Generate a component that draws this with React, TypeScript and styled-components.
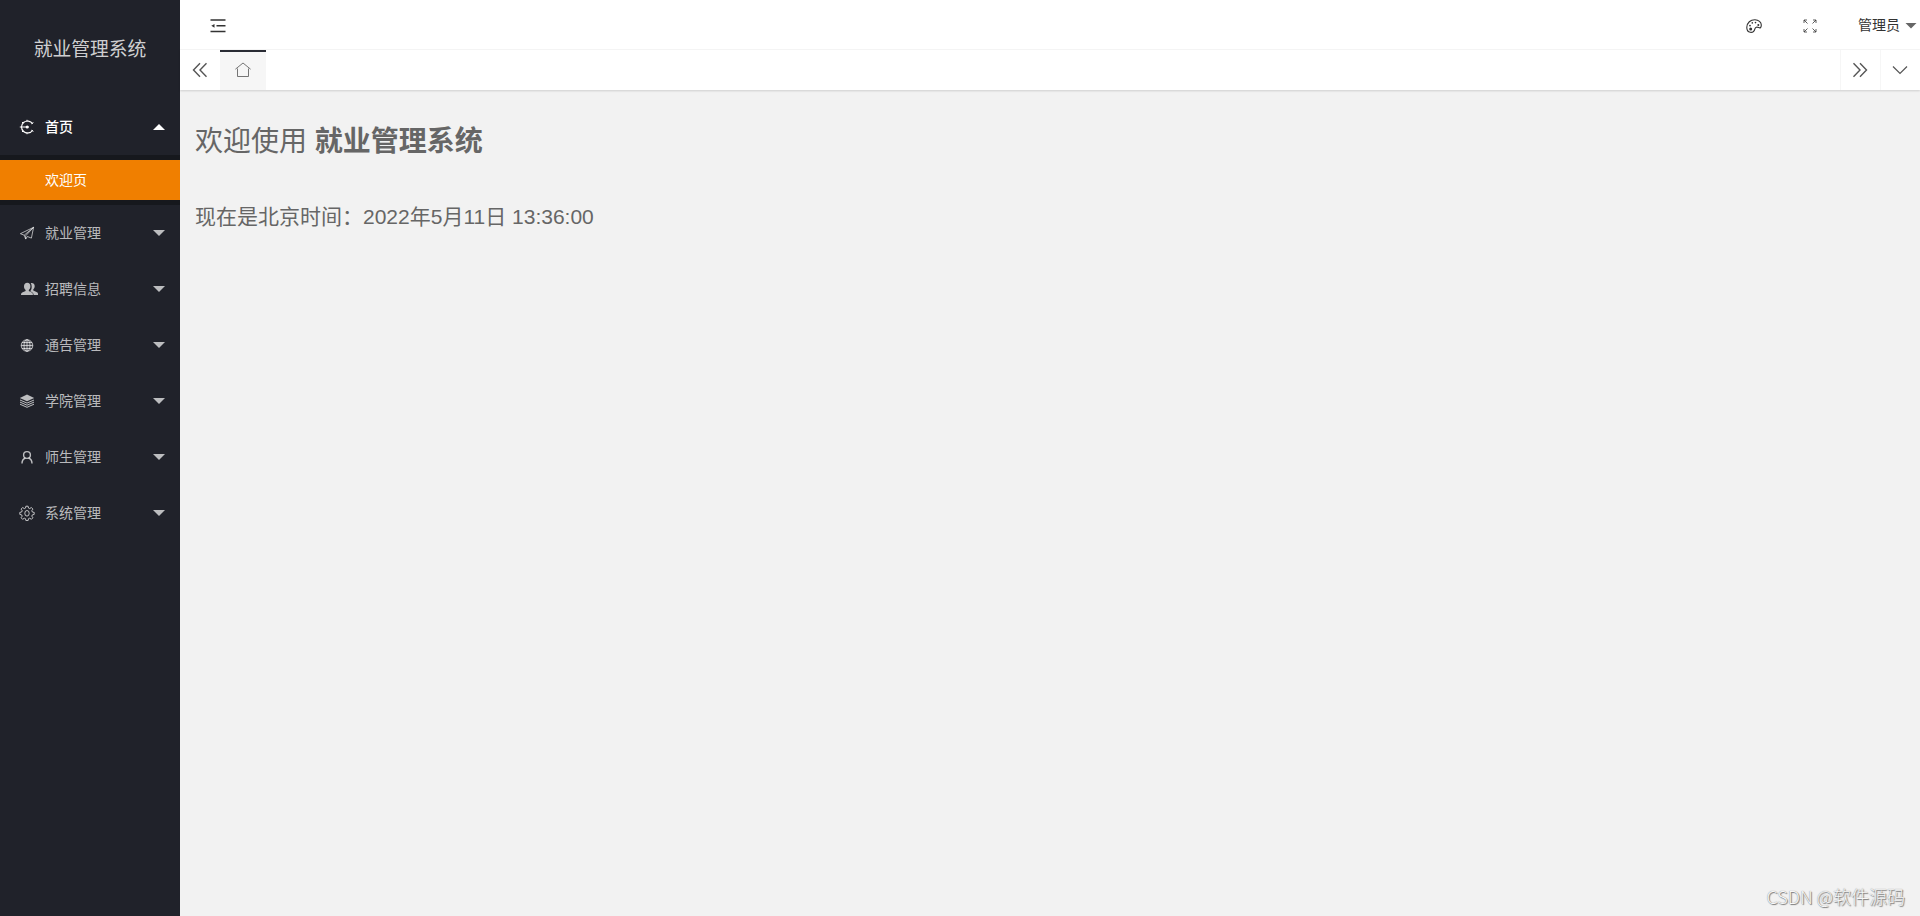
import React from 'react'
import styled, { createGlobalStyle } from 'styled-components'

const fontFamily = "'Liberation Sans', 'Noto Sans CJK SC', sans-serif"

const GlobalStyle = createGlobalStyle`
  * {
    box-sizing: border-box;
  }

  body {
    margin: 0;
    font-family: ${fontFamily};
    font-size: 14px;
    color: #333;
    background: #f2f2f2;
  }
`

const Layout = styled.div`
  position: relative;
  display: flex;
  height: 100vh;
  overflow: hidden;
`

const Sidebar = styled.aside`
  flex: none;
  width: 180px;
  background: #20222a;
`

const Logo = styled.div`
  height: 99px;
  padding-top: 25px;
  font-size: 18.8px;
  line-height: 49px;
  text-align: center;
  white-space: nowrap;
  color: rgba(255, 255, 255, 0.8);
`

const MenuItem = styled.div<{ $active?: boolean }>`
  display: flex;
  align-items: center;
  height: 56px;
  padding: 0 15px 0 19px;
  color: ${({ $active }) => ($active ? '#fff' : 'rgba(255, 255, 255, 0.7)')};
`

const MenuIcon = styled.span`
  display: flex;
  width: 26px;
`

const MenuLabel = styled.span`
  flex: 1;
  line-height: 20px;
  font-weight: ${({ $active }: { $active?: boolean }) => ($active ? 500 : 400)};
`

const Caret = styled.i<{ $up?: boolean }>`
  width: 12px;
  height: 6px;
  background: currentColor;
  clip-path: ${({ $up }) =>
    $up ? 'polygon(0 100%, 50% 0, 100% 100%)' : 'polygon(0 0, 100% 0, 50% 100%)'};
`

const SubMenu = styled.div`
  padding: 5px 0;
  background: #16181d;
`

const SubMenuItem = styled.div`
  height: 40px;
  padding-left: 45px;
  line-height: 40px;
  color: #fff;
  background: #f07f00;
`

const Main = styled.div`
  flex: 1;
  display: flex;
  flex-direction: column;
`

const Header = styled.header`
  display: flex;
  align-items: center;
  justify-content: space-between;
  height: 50px;
  padding: 2px 3px 0 30px;
  background: #fff;
  border-bottom: 1px solid #f6f6f6;
`

const HeaderRight = styled.div`
  display: flex;
  align-items: center;
`

const HeaderButton = styled.span`
  display: flex;
  justify-content: center;
  width: 56px;
`

const User = styled.div`
  display: flex;
  align-items: center;
  gap: 5px;
  margin-left: 20px;
  line-height: 20px;

  span {
    margin-top: -2px;
  }

  i {
    background: #666;
  }
`

const Tabs = styled.div`
  display: flex;
  height: 40px;
  background: #fff;
  box-shadow: 0 1px 2px rgba(0, 0, 0, 0.15);
`

const TabControl = styled.div<{ $bordered?: boolean }>`
  display: flex;
  align-items: center;
  justify-content: center;
  width: 40px;
  padding-right: 1px;
  color: #555;
  border-left: ${({ $bordered }) => ($bordered ? '1px solid #f6f6f6' : 'none')};
`

const HomeTab = styled.div`
  display: flex;
  align-items: center;
  justify-content: center;
  width: 46px;
  margin-right: auto;
  padding-bottom: 2px;
  color: #666;
  background: #f6f6f6;
  border-top: 2px solid #292b34;
`

const Content = styled.main`
  flex: 1;
  padding: 32px 15px;
  color: #666;
`

const Welcome = styled.h1`
  margin: 0;
  font-size: 28px;
  font-weight: 400;
  line-height: 40px;

  b {
    font-weight: 700;
  }
`

const Clock = styled.p`
  margin: 40px 0 0;
  font-size: 21px;
  line-height: 30px;
`

const Watermark = styled.div`
  position: absolute;
  right: 15px;
  bottom: 7px;
  font-family: 'Noto Sans CJK SC', sans-serif;
  font-size: 18px;
  font-weight: 300;
  line-height: 26px;
  color: #f8f8f8;
  text-shadow: 1px 1px 1px #777, 0 0 1px #777;
`

interface IconProps {
  children: React.ReactNode
  size?: number
  stroke?: number
}

const Icon = ({ children, size = 16, stroke = 1.2 }: IconProps) => (
  <svg width={size} height={size} viewBox="0 0 16 16" fill="none" stroke="currentColor" strokeWidth={stroke}>
    {children}
  </svg>
)

const HomeGauge = () => (
  <Icon>
    <path d="M13.6 4.8A6 6 0 1 0 13.6 11.2" />
    <path d="M.8 8h9" strokeWidth="1" />
    <path d="M8 .8v2M8 13.2v2M3 3l1 1M3 13l1-1M12.4 4.800l2-1.200M12.400 11.200l2 1.200" strokeWidth="1" />
    <circle cx="8.2" cy="8" r="1.500" fill="currentColor" stroke="none" />
  </Icon>
)

const Plane = () => (
  <Icon stroke={0.9}>
    <path d="M14.6 2.3 1.4 8.7l3.8 1.500 1.500 3.900 1.700-2.600 4 1.600zM14.6 2.3 5.2 10.2M6.700 13.900V10.800L14.600 2.300" />
  </Icon>
)

const Group = () => (
  <svg width="19" height="16" viewBox="0 0 19 16" fill="currentColor">
    <path d="M11.7 2.2c1.8-.8 4 .3 4 2.7 0 1.5-.6 2.7-1.4 3.4v1.2l3.7 1.8c.9.5 1.1 1.2 1.1 2.7h-4.5c0-1.7-.7-2.5-3.500-3.700.9-1 1.600-2.300 1.600-4.200 0-1.600-.2-3-1-3.900z" />
    <path d="M8.3 1.8c2 0 3.100 1.400 3.100 3.500 0 1.700-.6 3-1.600 3.800v1l3 1.400c1 .5 1.100 1.300 1.100 2.500H2c0-1.400.3-2.100 1.200-2.600L6.600 10V9C5.600 8.200 5 6.900 5 5.200c0-2 1.300-3.400 3.300-3.400z" />
  </svg>
)

const Globe = () => (
  <Icon stroke={0.9}>
    <circle cx="8" cy="8.500" r="5.800" fill="currentColor" fillOpacity=".2" />
    <ellipse cx="8" cy="8.500" rx="3" ry="5.800" />
    <path d="M8 2.700v11.600M2.200 8.500h11.600M3 5.500h10M3 11.500h10" />
  </Icon>
)

const Layers = () => (
  <Icon stroke={1}>
    <path d="M8 1.500 15.200 4.900 8 8.200.8 4.900z" fill="currentColor" stroke="none" />
    <path d="M1 7 8 10.100 15 7M1 9.100 8 12.200 15 9.100M1 11.200 8 14.300 15 11.200" />
  </Icon>
)

const Person = () => (
  <Icon stroke={1.4}>
    <circle cx="8" cy="6" r="3.400" />
    <path d="M3 14.400c0-2.700 1.200-4.500 3.400-5.400M13 14.400c0-2.700-1.200-4.500-3.400-5.400" />
  </Icon>
)

const Gear = () => (
  <Icon stroke={1}>
    <path d="M6.9 1.200h2.200l.4 1.900 1.200.5 1.700-1.100 1.500 1.600-1.100 1.600.5 1.300 1.900.4v2l-1.900.5-.5 1.200 1.100 1.700-1.500 1.500-1.700-1.100-1.200.5-.4 1.900H6.900l-.4-1.900-1.200-.5-1.700 1.100-1.500-1.500 1.100-1.700-.5-1.200-1.900-.5v-2L2.700 7l.5-1.300-1.100-1.600 1.500-1.600 1.700 1.100 1.200-.5z" />
    <ellipse cx="8" cy="8.300" rx="2.200" ry="2.800" />
  </Icon>
)

const Shrink = () => (
  <Icon stroke={1.5}>
    <path d="M.5 2h15M6.500 7.800h9M.5 13.500h15" />
    <path d="M4.500 5.900v3.800L1.300 7.800z" fill="currentColor" stroke="none" />
  </Icon>
)

const Palette = () => (
  <Icon stroke={1.1}>
    <path d="M4.300 14.300C2 14 .7 12 .8 9.300 1 4.800 4.500 1.600 9 1.700c3.600.1 6.300 2.600 6.300 5.300 0 2.400-1 3.400-2.500 2.600-1.800-.9-3.500-.6-3.900 1.200-.4 1.800-1.800 3.800-4.600 3.500z" />
    <g fill="currentColor" stroke="none">
      <circle cx="4.700" cy="11.100" r="1.500" />
      <circle cx="4" cy="7.600" r=".9" />
      <circle cx="6.300" cy="4.900" r=".8" />
      <circle cx="9.500" cy="4.600" r=".8" />
      <circle cx="12.300" cy="7" r="1" />
    </g>
  </Icon>
)

const FullScreen = () => (
  <Icon stroke={0.8}>
    <path d="M2 5V2h3M2 2l3.500 3.500M11 2h3v3M14 2l-3.500 3.500M2 11v3h3M2 14l3.500-3.500M14 11v3h-3M14 14l-3.500-3.500" />
  </Icon>
)

const menus = [
  { name: '就业管理', icon: <Plane /> },
  { name: '招聘信息', icon: <Group /> },
  { name: '通告管理', icon: <Globe /> },
  { name: '学院管理', icon: <Layers /> },
  { name: '师生管理', icon: <Person /> },
  { name: '系统管理', icon: <Gear /> },
]

export default function App() {
  return (
    <Layout>
      <GlobalStyle />
      <Sidebar>
        <Logo>就业管理系统</Logo>
        <MenuItem $active>
          <MenuIcon>
            <HomeGauge />
          </MenuIcon>
          <MenuLabel $active>首页</MenuLabel>
          <Caret $up />
        </MenuItem>
        <SubMenu>
          <SubMenuItem>欢迎页</SubMenuItem>
        </SubMenu>
        {menus.map(({ name, icon }) => (
          <MenuItem key={name}>
            <MenuIcon>{icon}</MenuIcon>
            <MenuLabel>{name}</MenuLabel>
            <Caret />
          </MenuItem>
        ))}
      </Sidebar>
      <Main>
        <Header>
          <Shrink />
          <HeaderRight>
            <HeaderButton>
              <Palette />
            </HeaderButton>
            <HeaderButton>
              <FullScreen />
            </HeaderButton>
            <User>
              <span>管理员</span>
              <Caret />
            </User>
          </HeaderRight>
        </Header>
        <Tabs>
          <TabControl>
            <Icon stroke={1.4}>
              <path d="M8 1.300 1.500 8 8 14.700M14.500 1.300 8 8l6.500 6.700" />
            </Icon>
          </TabControl>
          <HomeTab>
            <Icon stroke={0.9}>
              <path d="M.4 7.200 8 1l7.600 6.200M2.500 6.500v8h11v-8" />
            </Icon>
          </HomeTab>
          <TabControl $bordered>
            <Icon stroke={1.4}>
              <path d="M1.500 1.300 8 8l-6.500 6.700M8 1.300 14.500 8 8 14.700" />
            </Icon>
          </TabControl>
          <TabControl $bordered>
            <Icon stroke={1.2}>
              <path d="M1 4.500 8 11.500l7-7" />
            </Icon>
          </TabControl>
        </Tabs>
        <Content>
          <Welcome>
            欢迎使用 <b>就业管理系统</b>
          </Welcome>
          <Clock>现在是北京时间：2022年5月11日 13:36:00</Clock>
        </Content>
      </Main>
      <Watermark>CSDN @软件源码</Watermark>
    </Layout>
  )
}
